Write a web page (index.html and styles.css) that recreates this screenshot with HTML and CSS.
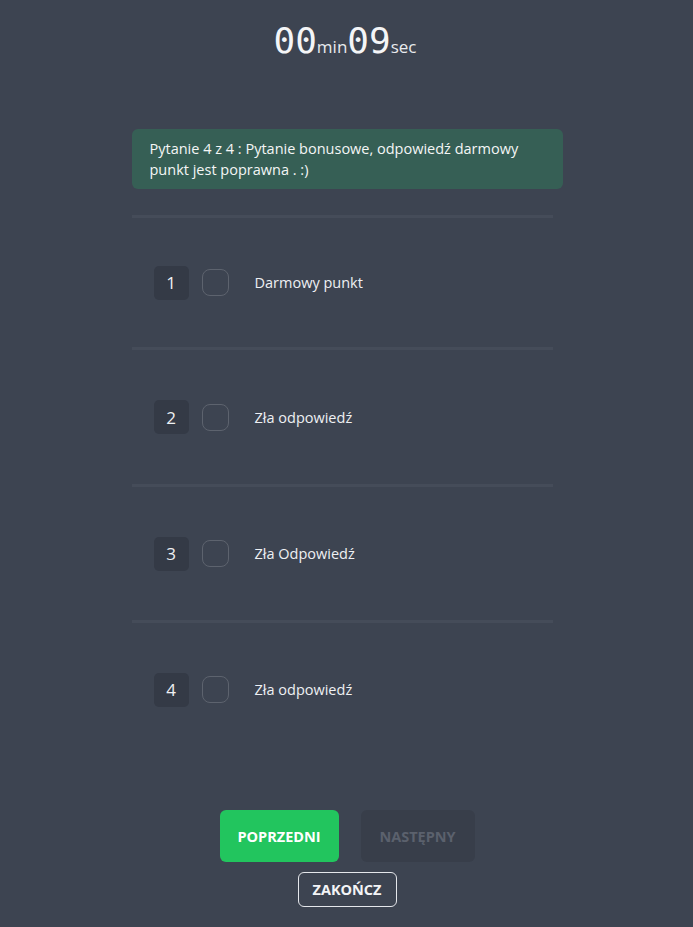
FILE: index.html
```html
<!DOCTYPE html>
<html lang="pl">
<head>
<meta charset="utf-8">
<title>Quiz</title>
<link rel="stylesheet" href="styles.css">
</head>
<body>
<div class="page">
  <div class="timer">
    <span class="num">00</span><span class="unit">min</span><span class="num">09</span><span class="unit">sec</span>
  </div>
  <div class="question">Pytanie 4 z 4 : Pytanie bonusowe, odpowiedź darmowy punkt jest poprawna . :)</div>
  <ul class="answers">
    <li class="answer first"><span class="idx">1</span><span class="check"></span><span class="label">Darmowy punkt</span></li>
    <li class="answer second"><span class="idx">2</span><span class="check"></span><span class="label">Zła odpowiedź</span></li>
    <li class="answer"><span class="idx">3</span><span class="check"></span><span class="label">Zła Odpowiedź</span></li>
    <li class="answer"><span class="idx">4</span><span class="check"></span><span class="label">Zła odpowiedź</span></li>
  </ul>
  <div class="nav">
    <button class="btn prev">POPRZEDNI</button>
    <button class="btn next">NASTĘPNY</button>
  </div>
  <div class="finish-row">
    <button class="btn finish">ZAKOŃCZ</button>
  </div>
</div>
</body>
</html>
```

FILE: styles.css
```css
html, body {
  margin: 0;
  padding: 0;
  background: #3d4451;
  height: 100%;
}
body {
  font-family: "Open Sans", "Noto Sans", sans-serif;
  color: #f1f2f4;
}
.page {
  width: 431px;
  margin: 0 auto;
  padding-left: 1px;
  display: flex;
  flex-direction: column;
}
.timer {
  display: flex;
  justify-content: center;
  align-items: baseline;
  height: 40px;
  padding-top: 21px;
  margin-bottom: 68px;
  line-height: 40px;
  padding-right: 4px;
}
.num {
  font-family: "DejaVu Sans Mono", monospace;
  font-size: 36px;
  color: #f4f5f7;
}
.unit {
  font-family: "Open Sans", sans-serif;
  font-size: 17px;
  color: #e9ebee;
}
.question {
  background: #365f55;
  border-radius: 6px;
  padding: 9px 18px;
  font-size: 14.5px;
  line-height: 21px;
  color: #f4f6f5;
}
.answers {
  list-style: none;
  margin: 26px 10px 0 0;
  padding: 0;
}
.answer {
  display: flex;
  align-items: center;
  border-top: 3px solid #454c59;
  height: 133px;
  padding-left: 22px;
}
.answer.first {
  height: 129px;
}
.answer.second {
  height: 134px;
}
.idx {
  width: 35px;
  height: 34px;
  border-radius: 5px;
  background: #343a46;
  display: flex;
  align-items: center;
  justify-content: center;
  font-size: 17px;
  color: #eef0f3;
}
.check {
  width: 25px;
  height: 25px;
  margin-left: 13px;
  border: 1px solid #5d636e;
  border-radius: 8px;
}
.label {
  margin-left: 26px;
  font-size: 14.5px;
  color: #eef0f3;
}
.nav {
  display: flex;
  justify-content: center;
  gap: 22px;
  margin-top: 54px;
}
.btn {
  font-family: "Open Sans", sans-serif;
  font-weight: 700;
  font-size: 14.5px;
  border: none;
  border-radius: 6px;
  cursor: pointer;
}
.prev {
  width: 119px;
  height: 52px;
  background: #22c55e;
  color: #ffffff;
}
.next {
  width: 114px;
  height: 52px;
  background: #383e4a;
  color: #5b616d;
}
.finish-row {
  display: flex;
  justify-content: center;
  margin-top: 10px;
}
.finish {
  width: 99px;
  height: 35px;
  background: transparent;
  border: 1px solid #e5e7eb;
  color: #f3f4f6;
}
```
